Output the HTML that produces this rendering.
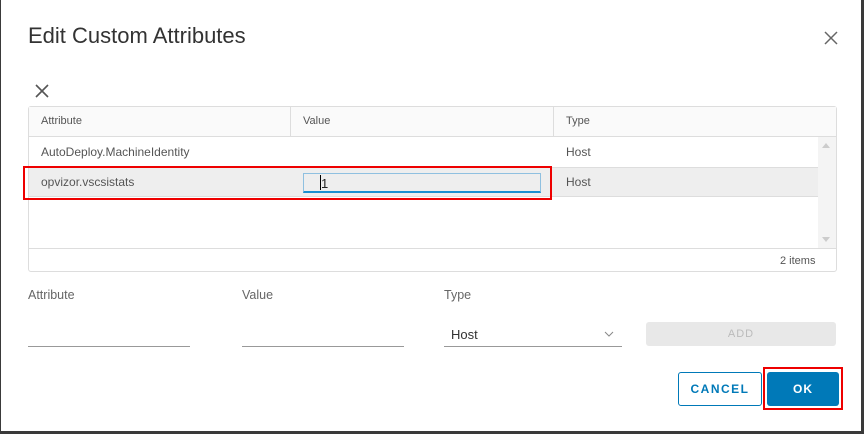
<!DOCTYPE html>
<html><head><style>
*{box-sizing:border-box;margin:0;padding:0}
body{width:864px;height:434px;background:#3a3a3a;font-family:"Liberation Sans",sans-serif;position:relative;overflow:hidden}
.dlg{position:absolute;left:1px;top:0;width:860px;height:431px;background:#fff}
.a{position:absolute}
.t{font-size:12px;color:#555}
</style></head><body>
<div class="dlg"></div>
<div class="a" style="left:28px;top:23px;font-size:22px;color:#333">Edit Custom Attributes</div>
<svg class="a" style="left:824px;top:31px" width="14" height="14"><path d="M1 1L13 13M13 1L1 13" stroke="#666" stroke-width="1.5"/></svg>
<svg class="a" style="left:35px;top:84px" width="14" height="14"><path d="M1 1L13 13M13 1L1 13" stroke="#555" stroke-width="1.6"/></svg>
<div class="a" style="left:28px;top:106px;width:809px;height:166px;border:1px solid #ddd;border-radius:3px"></div>
<div class="a" style="left:29px;top:107px;width:807px;height:30px;background:#fafafa;border-bottom:1px solid #ddd"></div>
<div class="a" style="left:290px;top:107px;width:1px;height:30px;background:#ddd"></div>
<div class="a" style="left:553px;top:107px;width:1px;height:30px;background:#ddd"></div>
<div class="a t" style="left:41px;top:115px;font-size:11px">Attribute</div>
<div class="a t" style="left:303px;top:115px;font-size:11px">Value</div>
<div class="a t" style="left:566px;top:115px;font-size:11px">Type</div>
<div class="a t" style="left:41px;top:145px">AutoDeploy.MachineIdentity</div>
<div class="a t" style="left:566px;top:145px">Host</div>
<div class="a" style="left:29px;top:167px;width:789px;height:30px;background:#eee;border-top:1px solid #ddd;border-bottom:1px solid #ddd"></div>
<div class="a t" style="left:41px;top:175px">opvizor.vscsistats</div>
<div class="a t" style="left:566px;top:175px">Host</div>
<div class="a" style="left:303px;top:173px;width:238px;height:20px;border:1px solid #8fc0e0;border-bottom:2px solid #1a8fd0;background:#eee"></div>
<div class="a" style="left:321px;top:176px;font-size:13px;color:#222">1</div>
<div class="a" style="left:320px;top:175px;width:1px;height:15px;background:#000"></div>
<div class="a" style="left:818px;top:137px;width:18px;height:111px;background:#f4f4f4"></div>
<div class="a" style="left:822px;top:143px;width:0;height:0;border:4px solid transparent;border-bottom:5px solid #ccc;border-top:0"></div>
<div class="a" style="left:822px;top:237px;width:0;height:0;border:4px solid transparent;border-top:5px solid #ccc;border-bottom:0"></div>
<div class="a" style="left:29px;top:248px;width:807px;height:1px;background:#ddd"></div>
<div class="a t" style="left:780px;top:255px;font-size:11px">2 items</div>
<div class="a" style="left:23px;top:166px;width:529px;height:34px;border:2px solid #e00"></div>
<div class="a t" style="left:28px;top:288px;color:#666;font-size:12.5px">Attribute</div>
<div class="a t" style="left:242px;top:288px;color:#666;font-size:12.5px">Value</div>
<div class="a t" style="left:444px;top:288px;color:#666;font-size:12.5px">Type</div>
<div class="a" style="left:28px;top:346px;width:162px;height:1px;background:#999"></div>
<div class="a" style="left:242px;top:346px;width:162px;height:1px;background:#999"></div>
<div class="a" style="left:444px;top:346px;width:178px;height:1px;background:#999"></div>
<div class="a" style="left:451px;top:327px;font-size:13px;color:#333">Host</div>
<svg class="a" style="left:604px;top:331px" width="10" height="6"><path d="M1 1L5 5L9 1" stroke="#888" fill="none"/></svg>
<div class="a" style="left:646px;top:322px;width:190px;height:24px;background:#e8e8e8;border-radius:3px;color:#bbb;font-size:11px;text-align:center;line-height:24px;letter-spacing:1px">ADD</div>
<div class="a" style="left:678px;top:372px;width:84px;height:34px;border:1px solid #0079b8;border-radius:3px;color:#0079b8;font-size:12px;font-weight:bold;text-align:center;line-height:32px;letter-spacing:1.5px">CANCEL</div>
<div class="a" style="left:767px;top:372px;width:72px;height:34px;background:#0079b8;border-radius:3px;color:#fff;font-size:12px;font-weight:bold;text-align:center;line-height:34px;letter-spacing:1px">OK</div>
<div class="a" style="left:763px;top:367px;width:80px;height:43px;border:2px solid #e00"></div>
</body></html>
